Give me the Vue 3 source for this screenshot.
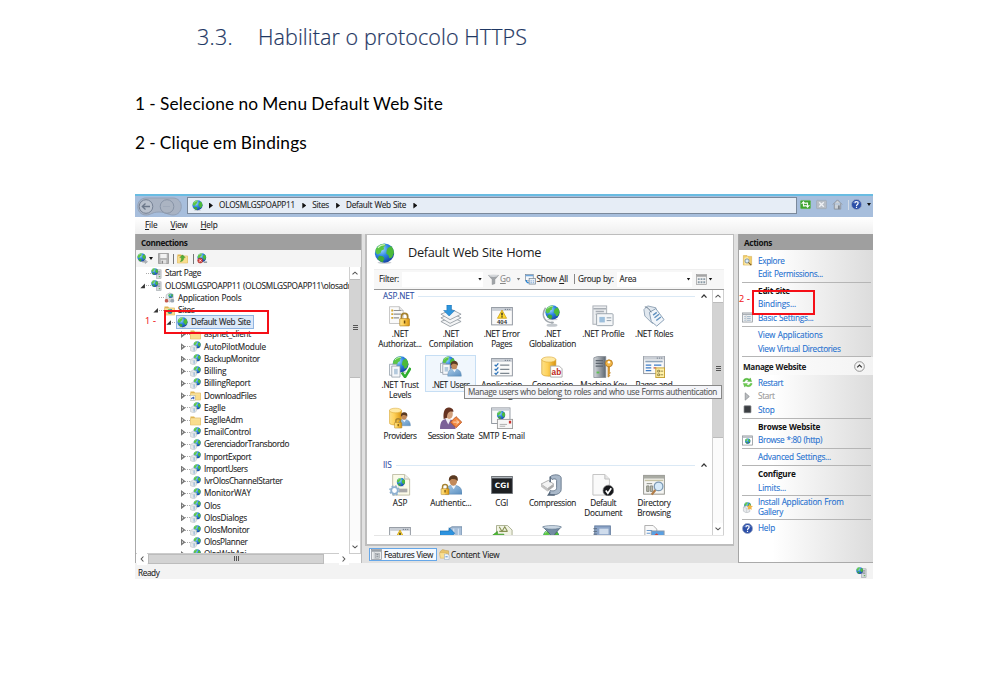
<script setup>
// Fits a label to a given width by adjusting its tracking.
const vFit = {
  mounted(el, { value }) {
    if (!value) return
    const range = document.createRange()
    range.selectNodeContents(el)
    const width = range.getBoundingClientRect().width
    el.style.letterSpacing = (value - width) / el.textContent.length + 'px'
  }
}

const app = (label, w) => ({ label, w, level: 3, icon: 'webapp', exp: 'closed' })
const tree = [
  { label: 'Start Page', w: 36, level: 0, icon: 'server' },
  { label: 'OLOSMLGSPOAPP11 (OLOSMLGSPOAPP11\\olosadm', w: 190, level: 0, icon: 'server', exp: 'open' },
  { label: 'Application Pools', w: 63.5, level: 1, icon: 'pools' },
  { label: 'Sites', w: 16.5, level: 1, icon: 'sites', exp: 'open' },
  { label: 'Default Web Site', w: 59.5, level: 2, icon: 'globe', exp: 'open', selected: true },
  { label: 'aspnet_client', w: 47, level: 3, icon: 'folder', exp: 'closed' },
  app('AutoPilotModule', 62),
  app('BackupMonitor', 56),
  app('Billing', 22.5),
  app('BillingReport', 46.5),
  { label: 'DownloadFiles', w: 52.5, level: 3, icon: 'shortcut', exp: 'closed' },
  app('Eaglle', 21.5),
  { label: 'EaglleAdm', w: 39, level: 3, icon: 'folder', exp: 'closed' },
  app('EmailControl', 47),
  app('GerenciadorTransbordo', 85),
  app('ImportExport', 47),
  app('ImportUsers', 43.5),
  app('IvrOlosChannelStarter', 78.5),
  app('MonitorWAY', 47),
  app('Olos', 16.5),
  app('OlosDialogs', 43),
  app('OlosMonitor', 45.5),
  app('OlosPlanner', 43.5),
  app('OlosWebApi', 42)
]

const aspnet = [
  { icon: 'authz', lines: [['.NET', 16.5], ['Authorizat...', 43.5]] },
  { icon: 'compile', lines: [['.NET', 16.5], ['Compilation', 44.5]] },
  { icon: 'error', lines: [['.NET Error', 36], ['Pages', 21]] },
  { icon: 'globalize', lines: [['.NET', 16.5], ['Globalization', 47]] },
  { icon: 'profile', lines: [['.NET Profile', 42]] },
  { icon: 'roles', lines: [['.NET Roles', 38]] },
  { icon: 'trust', lines: [['.NET Trust', 37], ['Levels', 22]] },
  { icon: 'users', lines: [['.NET Users', 38]], hot: true },
  { icon: 'settings', lines: [['Application', 41], ['Settings', 29]] },
  { icon: 'connstr', lines: [['Connection', 41], ['Strings', 25]] },
  { icon: 'machine', lines: [['Machine Key', 46]] },
  { icon: 'pages', lines: [['Pages and', 37], ['Controls', 30]] },
  { icon: 'providers', lines: [['Providers', 33]] },
  { icon: 'session', lines: [['Session State', 46.5]] },
  { icon: 'smtp', lines: [['SMTP E-mail', 46.5]] }
]
const iis = [
  { icon: 'asp', lines: [['ASP', 14.5]] },
  { icon: 'auth', lines: [['Authentic...', 41.5]] },
  { icon: 'cgi', lines: [['CGI', 13]] },
  { icon: 'compress', lines: [['Compression', 47]] },
  { icon: 'defdoc', lines: [['Default', 26], ['Document', 38]] },
  { icon: 'browse', lines: [['Directory', 33], ['Browsing', 33.5]] },
  { icon: 'error', lines: [] },
  { icon: 'failed', lines: [] },
  { icon: 'handler', lines: [] },
  { icon: 'filter', lines: [] },
  { icon: 'book', lines: [] },
  { icon: 'mime', lines: [] }
]

const actions = [
  { type: 'gap', h: 3.75 },
  { label: 'Explore', w: 26.5, icon: 'explore' },
  { label: 'Edit Permissions...', w: 65 },
  { type: 'sep', h: 3 },
  { label: 'Edit Site', w: 32, type: 'title' },
  { label: 'Bindings...', w: 38 },
  { label: 'Basic Settings...', w: 55.5, icon: 'basic' },
  { type: 'sep', h: 4 },
  { label: 'View Applications', w: 64.5 },
  { label: 'View Virtual Directories', w: 82.5 },
  { type: 'sep', h: 1.75 },
  { label: 'Manage Website', w: 63, type: 'section' },
  { type: 'gap', h: 0.75 },
  { label: 'Restart', w: 25, icon: 'restart' },
  { label: 'Start', w: 16.5, icon: 'start', off: true },
  { label: 'Stop', w: 16.5, icon: 'stop' },
  { type: 'sep', h: 3.75 },
  { label: 'Browse Website', w: 62, type: 'title' },
  { label: 'Browse *:80 (http)', w: 64, icon: 'page' },
  { type: 'sep', h: 3.25 },
  { label: 'Advanced Settings...', w: 73 },
  { type: 'sep', h: 3.5 },
  { label: 'Configure', w: 37.5, type: 'title' },
  { label: 'Limits...', w: 28 },
  { type: 'sep', h: 3 },
  { label: 'Install Application From', w: 85.5, second: 'Gallery', w2: 25, icon: 'gallery' },
  { type: 'sep', h: 4 },
  { label: 'Help', w: 17, icon: 'help' }
]
</script>

<template>
  <svg class="defs" aria-hidden="true">
    <defs>
      <radialGradient id="gOcean" cx=".35" cy=".3" r=".8">
        <stop offset="0" stop-color="#a5dcff" /><stop offset=".45" stop-color="#2e86e4" /><stop offset="1" stop-color="#12389a" />
      </radialGradient>
      <linearGradient id="gGold" x1="0" x2="1">
        <stop offset="0" stop-color="#fbe08a" /><stop offset=".4" stop-color="#ffd25a" /><stop offset="1" stop-color="#d9940f" />
      </linearGradient>
      <linearGradient id="gShirt" x1="0" x2="1" y2="1">
        <stop offset="0" stop-color="#a9cbe8" /><stop offset="1" stop-color="#5b8fc0" />
      </linearGradient>
      <linearGradient id="gSteel" x1="0" x2="1">
        <stop offset="0" stop-color="#d5d9dd" /><stop offset="1" stop-color="#5d6670" />
      </linearGradient>
    </defs>
    <symbol id="globe" viewBox="0 0 24 24">
      <ellipse cx="12" cy="22.4" rx="8" ry="1.4" fill="#c9cdd2" />
      <circle cx="12" cy="11.5" r="11" fill="url(#gOcean)" />
      <path d="M3 5.5C5 2.500 8.500 .8 12 .8l1.500 1.700-2.500 2 .5 2.500-3 1.500-1 3-3.500 1.500-2-2C1.300 9 2 7 3 5.500z" fill="#5cc645" />
      <path d="M15.500 6l4-2.500c2 2 3.300 5 3.300 8l-2.300 5-3 1-1-3.500-2.500-2 .5-3.500z" fill="#4cba3a" />
      <path d="M6 14.500l4 .5 2 2.500-2 4.500c-2.500-.5-5-2.500-6-4z" fill="#3fa838" />
      <path d="M4.500 5.500C7 2.500 10 1.800 12.500 2" fill="none" stroke="#d8f3c9" stroke-width="1.200" />
    </symbol>
    <symbol id="doc" viewBox="0 0 24 24">
      <path d="M3 1h13l5 5v17H3z" fill="#fafafa" stroke="#b5b5b5" /><path d="M16 1v5h5" fill="#e3e3e3" stroke="#b5b5b5" />
    </symbol>
    <symbol id="lock" viewBox="0 0 24 24">
      <path d="M7 12V7c0-6 10-6 10 0v5" fill="none" stroke="#a58230" stroke-width="3" />
      <rect x="4" y="11" width="16" height="12" rx="1" fill="url(#gGold)" stroke="#a9791c" /><path d="M12 14v5" stroke="#6d4c0c" stroke-width="2.500" />
    </symbol>
    <symbol id="person" viewBox="0 0 24 24">
      <path d="M2 24c0-9 4-11 10-11s11 2 11 11z" fill="url(#gShirt)" stroke="#5481ab" stroke-width=".6" />
      <path d="M9 13l3.500 5 3-5z" fill="#f3f6fa" />
      <ellipse cx="12" cy="7.500" rx="4.800" ry="6" fill="#c28a5b" /><path d="M6.500 8C6 2 9 .5 12.500 .5S18.500 3 17.500 8C16 5 12 5 10 5z" fill="#5a3a22" />
    </symbol>
    <symbol id="window" viewBox="0 0 24 24">
      <rect x=".7" y="2.700" width="22.600" height="19" fill="#fafafa" stroke="#8b929b" /><rect x="1.200" y="3.200" width="21.600" height="3.200" fill="#c9ced5" />
      <path d="M15 4.800h6" stroke="#6b7684" stroke-dasharray="1.400 1" />
    </symbol>
    <symbol id="cyl" viewBox="0 0 24 24">
      <path d="M4 4v16c0 4 16 4 16 0V4z" fill="url(#gGold)" stroke="#cf951d" stroke-width=".7" /><ellipse cx="12" cy="4" rx="8" ry="3" fill="#ffe9a3" stroke="#dca832" stroke-width=".7" />
    </symbol>

    <symbol id="server" viewBox="0 0 24 24">
      <rect x="12" y="4" width="10" height="19" fill="#d4d8dc" stroke="#8a9097" /><path d="M14 8h6M14 11h6M14 14h6" stroke="#6f767d" stroke-width="1.300" /><rect x="17" y="18" width="3" height="2" fill="#48a63a" />
      <use href="#globe" x="0" y="0" width="16" height="16" />
    </symbol>
    <symbol id="pools" viewBox="0 0 24 24">
      <path d="M5 6l7-4 8 3v13l-8 4-8-4z" fill="#e9ebed" stroke="#92989f" /><path d="M12 7v14M4 12l8 4 8-4" fill="none" stroke="#b5babf" />
      <rect x="2" y="15" width="7" height="8" rx="3" fill="#c55c4f" /><rect x="14" y="15" width="8" height="8" rx="3" fill="#9aa5b0" /><use href="#globe" x="9" y="3" width="11" height="11" />
    </symbol>
    <symbol id="folder" viewBox="0 0 24 24">
      <path d="M1 3h8l2 3h12v16H1z" fill="#e0b550" /><path d="M1 7h22v15H1z" fill="#f9dd8d" stroke="#deb660" /><path d="M2 8.500h20" stroke="#fff3c4" />
    </symbol>
    <symbol id="sites" viewBox="0 0 24 24">
      <use href="#folder" width="24" height="24" /><use href="#globe" x="7" y="8" width="12" height="12" />
    </symbol>
    <symbol id="shortcut" viewBox="0 0 24 24">
      <use href="#folder" width="24" height="24" /><rect x="0" y="12" width="11" height="11" fill="#fff" stroke="#9aa" /><path d="M2 21c0-4 2-5 5-5v-2.500l3 4-3 3.500v-2.500c-2 0-3 .5-5 2.500z" fill="#2c55b8" />
    </symbol>
    <symbol id="webapp" viewBox="0 0 24 24">
      <use href="#globe" x="7" y="0" width="17" height="17" />
      <path d="M1 12l6-3.500 7 2.500v9l-5 4-8-3z" fill="#e6e8eb" stroke="#b3b8be" /><path d="M1 12l8 3 5-4M9 15v8" fill="none" stroke="#c3c7cc" /><path d="M9 14v7" stroke="#6aa7dc" stroke-width="1.600" />
    </symbol>
    <symbol id="gallery" viewBox="0 0 24 24">
      <use href="#globe" x="4" y="0" width="16" height="16" /><path d="M3 11l7-3 7 4v9l-7 3-7-4z" fill="#e8eaed" stroke="#a1a7ae" /><path d="M3 11l7 3v10M10 14l7-2" fill="none" stroke="#b5babf" />
      <path d="M17 4l2 4 5 .5-3.500 3.500 1 5-4.500-2.500-4.500 2.500 1-5L10 8.500l5-.5z" fill="#f3b445" />
    </symbol>

    <symbol id="authz" viewBox="0 0 24 24">
      <use href="#doc" x="-2" y="0" width="20" height="22" /><path d="M5 6h8M5 10h8M5 14h6" stroke="#8f8f8f" stroke-width="1.300" /><path d="M2.500 5h2v2h-2zM2.500 9h2v2h-2zM2.500 13h2v2h-2z" fill="#d5a632" />
      <use href="#lock" x="9" y="7" width="16" height="17" />
    </symbol>
    <symbol id="compile" viewBox="0 0 24 24">
      <g fill="#f4f5f6" stroke="#8e969e" stroke-width=".9"><path d="M1 18l12-5 10 5-12 5.500z" /><path d="M1 14l12-5 10 5-12 6z" /><path d="M1 10l12-5 10 5-12 6z" /></g>
      <path d="M7.500 0h5v6h3.500l-6 6-6-6h3.500z" fill="#2d95dd" stroke="#1870b5" stroke-width=".6" />
    </symbol>
    <symbol id="error" viewBox="0 0 24 24">
      <use href="#window" width="24" height="24" /><path d="M12 5.500l5 9H7z" fill="#ffd92e" stroke="#c99a10" stroke-width=".8" /><path d="M12 8.500v3M12 12.300v1.200" stroke="#222" stroke-width="1.400" />
      <text x="12" y="20.800" text-anchor="middle" font-family="Liberation Sans" font-weight="700" font-size="6.500" fill="#333">404</text>
    </symbol>
    <symbol id="globalize" viewBox="0 0 24 24">
      <path d="M5 3C-1 12 5 20 14 19M12 18v3" fill="none" stroke="#a2a8ae" stroke-width="1.600" /><ellipse cx="12" cy="22" rx="6" ry="1.700" fill="#c3c8cd" /><use href="#globe" x="4" y="0" width="17" height="17" />
    </symbol>
    <symbol id="profile" viewBox="0 0 24 24">
      <rect x="1" y="1" width="15" height="20" fill="#eceef0" stroke="#a7adb4" /><path d="M1.500 4h14M4 7h9M4 10h5" stroke="#a7adb4" stroke-width="1.600" />
      <rect x="5" y="9.500" width="18" height="13" rx="1" fill="#f4f6f8" stroke="#98a1aa" /><rect x="8" y="13" width="6" height="6" fill="#9dbfdc" /><path d="M16 14h5M16 17h5" stroke="#8997a5" />
    </symbol>
    <symbol id="roles" viewBox="0 0 24 24">
      <path d="M1 5l4-4 9 2 2 13-6 4-8-8z" fill="#e1e8ef" stroke="#8ea1b3" />
      <path d="M7 8l7-4 9 12-8 7-6-5z" fill="#f1f5fa" stroke="#8299b0" /><path d="M11 11l4-3M12.500 14l5-4M14.500 17l5-4" stroke="#5f91bf" stroke-width="1.500" /><path d="M2 2c3 0 5 3 7 6" fill="none" stroke="#607487" />
    </symbol>
    <symbol id="trust" viewBox="0 0 24 24">
      <use href="#globe" x="3" y="0" width="19" height="19" /><g fill="#f6f8fa" stroke="#8b97a3" stroke-width=".8"><path d="M.5 9h8v12h-8z" /><path d="M3 11h9v12H3z" /></g><path d="M5.500 14h4v6h-4z" fill="#b4cadd" />
      <path d="M14 18l3.500 5L23.500 13" fill="none" stroke="#2fae2f" stroke-width="2.800" />
    </symbol>
    <symbol id="users" viewBox="0 0 24 24">
      <use href="#globe" x="2" y="0" width="15" height="15" /><g fill="#f6f8fa" stroke="#8b97a3" stroke-width=".8"><path d="M.5 8h6v10h-6z" /><path d="M3 9h8v11H3z" /></g><path d="M5 12h4v5H5z" fill="#b4cadd" />
      <use href="#person" x="7" y="3" width="17" height="21" />
    </symbol>
    <symbol id="settings" viewBox="0 0 24 24">
      <use href="#window" width="24" height="24" /><path d="M4 9.500l1.500 1.500 2.500-3M4 14l1.500 1.500 2.500-3M4 18.500L5.500 20 8 17" fill="none" stroke="#2c72b8" stroke-width="1.400" /><path d="M10 10h10M10 14.500h10M10 19h10" stroke="#7d8790" stroke-width="1.300" />
    </symbol>
    <symbol id="connstr" viewBox="0 0 24 24">
      <use href="#cyl" x="-3" y="0" width="23" height="23" /><path d="M10.500 11h9.500l3 3v9H10.500z" fill="#fff" stroke="#aaa" /><text x="16.800" y="20.500" text-anchor="middle" font-family="Liberation Sans" font-weight="700" font-size="9" fill="#bd2520">ab</text>
    </symbol>
    <symbol id="machine" viewBox="0 0 24 24">
      <path d="M2 2l4-1.500h9V23.500H2z" fill="url(#gSteel)" stroke="#7f878f" stroke-width=".8" /><path d="M4 5h8M4 8h8M4 11h8" stroke="#5d656e" stroke-width="1.200" /><rect x="5" y="17" width="3" height="2" fill="#5ec251" />
      <circle cx="18.500" cy="8" r="3.800" fill="#f3b84a" stroke="#b7791b" /><circle cx="18.500" cy="6.800" r="1.300" fill="#fff" /><path d="M17.500 12v11l2-1.500-1-1.500 1.500-1.500-1-1.500V12z" fill="#e9a437" stroke="#b7791b" stroke-width=".8" />
    </symbol>
    <symbol id="pages" viewBox="0 0 24 24">
      <use href="#window" x="0" y="-2.500" width="24" height="24" /><path d="M2.500 6h19" stroke="#8fa5bb" stroke-width="1.800" /><path d="M3 10h6M3 13h6M3 16h6M12 10h8" stroke="#3c7cc8" stroke-width="1.400" /><path d="M11.500 13h3" stroke="#c94a3b" stroke-width="1.400" />
      <rect x="14" y="13" width="9.500" height="10.500" fill="#fff1a8" stroke="#c39c2e" /><path d="M16 15.500h2v2h-2zM16 19.500h2v2h-2zM19 16.500h3M19 20.500h3" stroke="#7a6a2c" stroke-width=".8" fill="none" />
    </symbol>
    <symbol id="providers" viewBox="0 0 24 24">
      <use href="#cyl" x="-3" y="0" width="20" height="21" /><use href="#person" x="9" y="3" width="15" height="20" /><use href="#lock" x="4" y="11" width="12" height="13" />
    </symbol>
    <symbol id="session" viewBox="0 0 24 24">
      <path d="M0 24c0-9 3-11 8-11s9 2 9 11z" fill="#7c6297" /><path d="M6 13l3 6 3-6z" fill="#f2eff5" /><ellipse cx="10" cy="7.500" rx="4" ry="5.500" fill="#d3a17c" /><path d="M4 13C3 4 6 0 10 .5s5 3 4.500 5C10 4 8 6 7.500 12z" fill="#663321" />
      <path d="M11.500 16.500l6-6 6.200 6-6.200 6z" fill="#f28a43" stroke="#b9501a" /><path d="M14.500 16.500h6M18 14.500l2.500 2-2.500 2" fill="none" stroke="#ffe0c3" />
    </symbol>
    <symbol id="smtp" viewBox="0 0 24 24">
      <rect x=".7" y="1" width="20" height="17" fill="#fafafa" stroke="#8b929b" /><path d="M1 2.800h19.500" stroke="#c9ced5" stroke-width="2.500" /><use href="#globe" x="6" y="4" width="10" height="10" />
      <rect x="7" y="13.500" width="16.500" height="10" fill="#f6f6f6" stroke="#9c9c9c" /><rect x="19.500" y="15" width="2.500" height="3" fill="#c9302c" /><path d="M9.500 19h8M9.500 21h6" stroke="#a9a9a9" />
    </symbol>
    <symbol id="asp" viewBox="0 0 24 24">
      <path d="M4 .5h13l5.500 5V23H4z" fill="#fbfae8" stroke="#bdbba3" /><path d="M17 .5v5h5" fill="#eee" stroke="#bdbba3" /><use href="#globe" x="8" y="4" width="10" height="10" /><rect x="11" y="16" width="9" height="4" fill="#a9a9a9" />
      <circle cx="6" cy="18" r="3.600" fill="#fff" stroke="#8fb1d0" stroke-width="2" /><circle cx="6" cy="18" r="5" fill="none" stroke="#8fb1d0" stroke-width="1.600" stroke-dasharray="2 1.930" />
    </symbol>
    <symbol id="auth" viewBox="0 0 24 24">
      <use href="#person" x="4" y="0" width="21" height="23" /><use href="#lock" x="-1" y="9" width="13" height="15" />
    </symbol>
    <symbol id="cgi" viewBox="0 0 24 24">
      <rect x=".7" y="2.700" width="22.600" height="18.600" fill="#1d1f22" stroke="#70757a" /><path d="M1 4h22" stroke="#aeb4ba" stroke-width="1.500" />
      <text x="12" y="15.300" text-anchor="middle" font-family="DejaVu Sans" font-weight="700" font-size="8" textLength="16" fill="#fff">CGI</text>
    </symbol>
    <symbol id="compress" viewBox="0 0 24 24">
      <path d="M10 3c3-3 11-3 12 1v13c0 5-8 7-13 5l1-4c4 1 7 0 7-3V7c0-2-3-2-5-1z" fill="#a9b8c9" stroke="#5e7084" stroke-width=".9" />
      <path d="M0 11l8-4 6 4-7 5z" fill="#f3f3f3" stroke="#989898" stroke-width=".8" /><path d="M0 11v3l7 5v-3z" fill="#c3c3c3" /><path d="M7 19l7-5v-3l-7 5z" fill="#ababab" /><path d="M10 3v6M10 20l-2 3h7" stroke="#55677b" stroke-width="1.600" fill="none" />
    </symbol>
    <symbol id="defdoc" viewBox="0 0 24 24">
      <path d="M1 .5h13l5 5V23H1z" fill="#fafafa" stroke="#bdbdbd" /><path d="M14 .5v5h5" fill="#e6e6e6" stroke="#bdbdbd" /><circle cx="17.800" cy="18" r="5.800" fill="#15171a" stroke="#777" stroke-width=".7" /><path d="M15 18l2.300 3 3.700-5.500" fill="none" stroke="#fff" stroke-width="1.800" />
    </symbol>
    <symbol id="browse" viewBox="0 0 24 24">
      <rect x=".7" y="1.500" width="22.600" height="20.500" fill="#f5f5f3" stroke="#8e8f88" /><path d="M1 3.500h22" stroke="#a9aba3" stroke-width="3" /><path d="M2 7h20" stroke="#c6c3a4" stroke-width="1.600" /><path d="M4 10.500h6" stroke="#828579" /><path d="M4 13h2.500v6H4zM8 13h2.500v6H8z" fill="#b7b9af" stroke="#828579" />
      <circle cx="17" cy="13.500" r="4.700" fill="#d7ebfa" stroke="#7d9ab4" stroke-width="1.400" /><path d="M13.500 17.500l-4 5" stroke="#b17c48" stroke-width="2.500" />
    </symbol>
    <symbol id="failed" viewBox="0 0 24 24">
      <path d="M10 4l3-2h11v22H10z" fill="#a8bfd9" stroke="#6f88a4" /><path d="M15 4v20M20 4v20" stroke="#e1ebf5" /><path d="M0 6.500h10V3l6 6-6 6v-3.500H0z" fill="#2d92de" stroke="#186cae" stroke-width=".7" />
    </symbol>
    <symbol id="handler" viewBox="0 0 24 24">
      <path d="M6 .5h12l5 5V24H6z" fill="#f1f3e4" stroke="#a5ab8a" /><path d="M9 2l3 5 3-5 3 5M9 7h9" fill="none" stroke="#858f51" stroke-width="1.200" /><path d="M14 10H7V7l-7 5.500 7 6v-4h7z" fill="#4cbb33" stroke="#2f8a20" stroke-width=".7" />
    </symbol>
    <symbol id="filter" viewBox="0 0 24 24">
      <use href="#globe" x="1" y="4" width="20" height="20" /><path d="M2 2h20l-7 8v7h-5v-7z" fill="#748ca3" stroke="#43576c" stroke-width=".8" /><ellipse cx="12" cy="2.500" rx="10" ry="2" fill="#c8d5e1" stroke="#5a7087" stroke-width=".6" />
    </symbol>
    <symbol id="book" viewBox="0 0 24 24">
      <rect x="3" y="1" width="17" height="22" fill="#8ca4c7" stroke="#5f789c" /><rect x="8" y="4" width="10" height="6" fill="#cfdcec" /><path d="M1.500 4h4M1.500 7h4M1.500 10h4" stroke="#5b6b80" />
    </symbol>
    <symbol id="mime" viewBox="0 0 24 24">
      <path d="M2 .5h9l4 4V22H2z" fill="#fafafa" stroke="#a6a6a6" /><path d="M4 6h6M4 9h4" stroke="#5a8fc9" /><rect x="9" y="6.500" width="14" height="12" fill="#5aa0e2" stroke="#8c98a5" /><path d="M11 12l4-3 4 4 3-2v4H11z" fill="#d0453a" />
    </symbol>

    <symbol id="explore" viewBox="0 0 24 24">
      <path d="M3 1h8l2 2h8v19H3z" fill="#f3ce68" stroke="#caa03b" /><path d="M5 6l8-2 6 17H5z" fill="#fbe9ab" /><circle cx="11" cy="13" r="4.500" fill="#dcecf8" stroke="#6f87a0" stroke-width="1.800" /><path d="M14 16l6 6" stroke="#7a5c2c" stroke-width="2.600" />
    </symbol>
    <symbol id="basic" viewBox="0 0 24 24">
      <rect x="1" y="2" width="22" height="20" fill="#eef0f2" stroke="#878d94" stroke-width="1.500" /><path d="M2 5h20" stroke="#aab0b6" stroke-width="3" /><path d="M5 10h3M5 14h3M5 18h3M11 10h8M11 14h8M11 18h8" stroke="#93aac0" stroke-width="1.800" /><path d="M9 6v15" stroke="#aab0b6" />
    </symbol>
    <symbol id="features" viewBox="0 0 24 24">
      <rect x="1" y="1" width="22" height="22" fill="#eceeef" stroke="#878d94" stroke-width="1.500" /><path d="M2 4h20" stroke="#9ba1a7" stroke-width="4" /><path d="M7 6v16" stroke="#aab0b6" stroke-width="1.500" /><rect x="10" y="9" width="8" height="11" fill="#c8cdd1" stroke="#7f868d" /><path d="M12 12h4M12 16h4" stroke="#6f767d" stroke-width="1.500" />
    </symbol>
    <symbol id="restart" viewBox="0 0 24 24">
      <path d="M2 10C3 3 11 1 16 5l2-3 3 8-9-.5 3-2C11 5 7 6 6 10z" fill="#5cc441" stroke="#379b25" stroke-width=".8" /><path d="M22 14c-1 7-9 9-14 5l-2 3-3-8 9 .5-3 2c4 2.500 8 1.500 9-2.500z" fill="#6fd04f" stroke="#379b25" stroke-width=".8" />
    </symbol>
    <symbol id="start" viewBox="0 0 24 24"><path d="M7 4l9 8-9 8z" fill="#b9bcbf" stroke="#85898d" stroke-width="1.500" /></symbol>
    <symbol id="stop" viewBox="0 0 24 24"><rect x="4.500" y="4" width="15" height="15" rx="1" fill="#3b3e42" stroke="#75797e" stroke-width="1.500" /></symbol>
    <symbol id="page" viewBox="0 0 24 24"><rect x="1" y="2" width="22" height="20" fill="#fff" stroke="#868c93" stroke-width="1.600" /><path d="M2 4.500h20" stroke="#abb1b8" stroke-width="3" /><use href="#globe" x="6" y="7" width="13" height="13" /></symbol>
    <symbol id="help" viewBox="0 0 24 24">
      <circle cx="12" cy="12" r="11" fill="#2c4fa8" stroke="#9ba7c4" stroke-width="1.800" /><path d="M4 9c2-6 14-6 16 0-4-3-12-3-16 0z" fill="#93aae0" /><path d="M8.500 9.500c0-5 7.500-4.500 7 0-.3 2.500-3.500 2.500-3.500 5.500M12 16.800v2.700" fill="none" stroke="#fff" stroke-width="2.600" />
    </symbol>
    <symbol id="connect" viewBox="0 0 24 24"><use href="#globe" width="20" height="20" /><path d="M12 18h6v-3l5 4-5 4v-3h-6z" fill="#b8bec4" stroke="#70777e" stroke-width=".8" /></symbol>
    <symbol id="save" viewBox="0 0 24 24"><path d="M1 1h22v22H1z" fill="#b3b3b3" stroke="#898989" stroke-width="1.500" /><path d="M5 2h14v9H5z" fill="#f2f2f2" /><path d="M6 15h12v8H6z" fill="#e1e1e1" /><path d="M8 17h3v6H8z" fill="#888" /></symbol>
    <symbol id="up" viewBox="0 0 24 24"><use href="#folder" width="24" height="24" /><path d="M12 4l6 6h-3c0 6-3 9-8 9 3-3 3-6 2-9H6z" fill="#52ae37" stroke="#348425" stroke-width=".8" /></symbol>
    <symbol id="disconnect" viewBox="0 0 24 24"><use href="#globe" width="21" height="21" /><circle cx="7" cy="16.500" r="5.500" fill="#d23b36" stroke="#97201c" /><path d="M4.500 14l5 5M9.500 14l-5 5" stroke="#fff" stroke-width="1.800" /><path d="M15 20h7" stroke="#8a9097" stroke-width="3" /></symbol>
    <symbol id="refresh" viewBox="0 0 24 24"><rect x="1" y="3" width="22" height="18" rx="2" fill="#3fa52e" stroke="#69bd5b" /><path d="M7.500 6v9h5M3.500 10.500l4-4.500 4 4.500M16.500 18V9h-5M12.500 13.500l4 4.500 4-4.500" fill="none" stroke="#fff" stroke-width="2.200" /></symbol>
    <symbol id="halt" viewBox="0 0 24 24"><rect x="1" y="3" width="22" height="18" rx="2" fill="#b7bdc5" stroke="#959eaa" /><path d="M7 7l10 10M17 7L7 17" stroke="#eef1f5" stroke-width="3" /></symbol>
    <symbol id="home" viewBox="0 0 24 24"><path d="M2 12L12 2l10 10M5 10v12h14V10" fill="#ccd2d8" stroke="#8b929b" stroke-width="2" /><path d="M13 14h4v8h-4z" fill="#7f868f" /></symbol>
    <symbol id="funnel" viewBox="0 0 24 24"><path d="M1 3h22l-8 9v9l-6 2V12z" fill="#a0a4a8" stroke="#83878b" /><ellipse cx="12" cy="4" rx="10" ry="2.500" fill="#d5d8db" /></symbol>
    <symbol id="showall" viewBox="0 0 24 24"><rect x="1" y="1" width="17" height="14" fill="#f5f8fb" stroke="#788594" stroke-width="1.500" /><path d="M1 3.500h17" stroke="#6ea6dc" stroke-width="3" /><rect x="9" y="10" width="14" height="12" fill="#edf2f7" stroke="#708090" stroke-width="1.500" /><path d="M3 13c0 5 1 6 5 6" fill="none" stroke="#2c87d5" stroke-width="3" /><path d="M12 15h3M17 15h3M12 19h3M17 19h3" stroke="#4c86c5" stroke-width="1.500" /></symbol>
    <symbol id="grid" viewBox="0 0 24 24"><rect x="1" y="1" width="22" height="22" fill="#f1f1f1" stroke="#9a9a9a" stroke-width="1.500" /><path d="M1 4h22" stroke="#a5a5a5" stroke-width="4" /><path d="M4 9h4v4H4zM10 9h4v4h-4zM16 9h4v4h-4zM4 16h4v4H4zM10 16h4v4h-4zM16 16h4v4h-4z" fill="#8a9aa5" /></symbol>
    <symbol id="content" viewBox="0 0 24 24"><path d="M3 5l5-4 6 2 7 1v12H3z" fill="#e7c36b" stroke="#bb9440" /><path d="M1 8h15l3 12H3z" fill="#f9df92" stroke="#d2a850" /><path d="M12 11h7l3 3v9H12z" fill="#f2f6fb" stroke="#85a0bd" /><path d="M14 17h5" stroke="#4d8aca" stroke-width="2" /></symbol>
    <symbol id="chev" viewBox="0 0 12 12"><path d="M3 7.700L6 5l3 2.700" fill="none" stroke="#555" stroke-width="1.300" /></symbol>
    <symbol id="chevBold" viewBox="0 0 12 12"><path d="M3 8l3-3.200L9 8" fill="none" stroke="#333" stroke-width="1.500" /></symbol>
  </svg>

  <main class="doc">
    <h1><span v-fit="36">3.3.</span><span v-fit="269">Habilitar o protocolo HTTPS</span></h1>
    <p><span v-fit="308">1 - Selecione no Menu Default Web Site</span></p>
    <p><span v-fit="172">2 - Clique em Bindings</span></p>

    <section class="window">
      <div class="address">
        <svg class="nav" viewBox="0 0 48 20">
          <path d="M11 2h27c11 0 11 17 0 17-5 0-7-3-14-3s-8 3-13 3C0 19 0 2 11 2z" fill="#a9b3c3" stroke="#93a1b6" />
          <circle cx="11" cy="10.500" r="6.800" fill="#b9c1cd" stroke="#778396" /><path d="M15 10.500H7.500M10.500 7.500l-3.200 3 3.200 3" fill="none" stroke="#6b7789" stroke-width="1.300" />
          <circle cx="32" cy="10.500" r="6.800" fill="#abb4c2" stroke="#8894a7" /><path d="M28 10.500h7" stroke="#a0aaba" />
        </svg>
        <div class="crumbs">
          <svg class="i11"><use href="#globe" /></svg>
          <i class="tri"></i><span v-fit="76">OLOSMLGSPOAPP11</span>
          <i class="tri"></i><span v-fit="16.5">Sites</span>
          <i class="tri"></i><span v-fit="60">Default Web Site</span>
          <i class="tri"></i>
        </div>
        <div class="tools">
          <svg class="i11"><use href="#refresh" /></svg>
          <svg class="i11"><use href="#halt" /></svg>
          <svg class="i11"><use href="#home" /></svg>
          <i class="vline"></i>
          <svg class="i11 helpico"><use href="#help" /></svg>
          <i class="drop"></i>
        </div>
      </div>

      <nav class="menu">
        <span v-fit="12.5"><u>F</u>ile</span><span v-fit="17"><u>V</u>iew</span><span v-fit="17"><u>H</u>elp</span>
      </nav>

      <div class="body">
        <aside class="connections">
          <header><b v-fit="46.500">Connections</b></header>
          <div class="ctools">
            <svg class="i11"><use href="#connect" /></svg><i class="drop"></i>
            <svg class="i11 save"><use href="#save" /></svg><i class="vline"></i>
            <svg class="i11"><use href="#up" /></svg><i class="vline second"></i>
            <svg class="i11"><use href="#disconnect" /></svg>
          </div>
          <div class="treebox">
            <div class="tree">
              <div v-for="n in tree" :key="n.label" class="node" :class="'l' + n.level">
                <i class="exp" :class="n.exp"></i><i class="dash"></i>
                <span class="entry" :class="{ selected: n.selected }">
                  <svg class="i11"><use :href="'#' + n.icon" /></svg><span v-fit="n.w" class="name">{{ n.label }}</span>
                </span>
              </div>
            </div>
            <div class="vbar">
              <svg class="arrow"><use href="#chev" /></svg>
              <div class="thumb tall"><i class="grip"></i></div>
              <svg class="arrow down"><use href="#chev" /></svg>
            </div>
          </div>
          <div class="hbar">
            <svg class="arrow left"><use href="#chev" /></svg>
            <div class="hthumb"><i class="grip vert"></i></div>
            <svg class="arrow right"><use href="#chev" /></svg>
          </div>
        </aside>

        <div class="center">
          <div class="pane">
            <div class="heading"><svg><use href="#globe" /></svg><span v-fit="133">Default Web Site Home</span></div>
            <div class="filter">
              <span v-fit="20">Filter:</span>
              <div class="box"><i class="drop"></i></div>
              <svg class="i11 funnel"><use href="#funnel" /></svg><span v-fit="10.500" class="dim"><u>G</u>o</span><i class="drop dimdrop"></i>
              <svg class="i11 all"><use href="#showall" /></svg><span v-fit="31.500">Show <u>A</u>ll</span><i class="vline dark"></i>
              <span v-fit="35.500">Group by:</span>
              <div class="box area"><span v-fit="17">Area</span><i class="drop"></i></div>
              <svg class="i11 gridico"><use href="#grid" /></svg><i class="drop"></i>
            </div>
            <div class="list">
              <div class="features">
                <div class="group"><span v-fit="31">ASP.NET</span><i class="rule"></i><svg><use href="#chevBold" /></svg></div>
                <div class="cells">
                  <div v-for="f in aspnet" :key="f.icon" class="cell" :class="{ hot: f.hot }">
                    <svg class="big"><use :href="'#' + f.icon" /></svg>
                    <span v-for="l in f.lines" :key="l[0]" v-fit="l[1]">{{ l[0] }}</span>
                  </div>
                </div>
                <div class="group second"><span v-fit="8.500">IIS</span><i class="rule"></i><svg><use href="#chevBold" /></svg></div>
                <div class="cells">
                  <div v-for="f in iis" :key="f.icon" class="cell">
                    <svg class="big"><use :href="'#' + f.icon" /></svg>
                    <span v-for="l in f.lines" :key="l[0]" v-fit="l[1]">{{ l[0] }}</span>
                  </div>
                </div>
              </div>
              <div class="vbar">
                <svg class="arrow"><use href="#chev" /></svg>
                <div class="thumb long"><i class="grip"></i></div>
                <svg class="arrow down"><use href="#chev" /></svg>
              </div>
            </div>
          </div>
          <div class="tabs">
            <div class="tab on"><svg class="i11"><use href="#features" /></svg><span v-fit="49">Features View</span></div>
            <div class="tab"><svg class="i11"><use href="#content" /></svg><span v-fit="48.500">Content View</span></div>
          </div>
        </div>

        <aside class="actions">
          <header><b v-fit="28">Actions</b></header>
          <template v-for="(a, i) in actions" :key="i">
            <div v-if="a.type === 'gap' || a.type === 'sep'" :class="a.type" :style="{ height: a.h + 'px' }"></div>
            <div v-else-if="a.type === 'section'" class="section">
              <b v-fit="a.w">{{ a.label }}</b>
              <svg viewBox="0 0 12 12"><circle cx="6" cy="6" r="5.300" fill="#f5f5f5" stroke="#8c8c8c" /><path d="M3.500 7L6 4.500 8.500 7" fill="none" stroke="#333" stroke-width="1.300" /></svg>
            </div>
            <div v-else class="action" :class="[a.type, { off: a.off, two: a.second }]">
              <svg class="i11"><use v-if="a.icon" :href="'#' + a.icon" /></svg>
              <div><div><span v-fit="a.w">{{ a.label }}</span></div><div v-if="a.second"><span v-fit="a.w2">{{ a.second }}</span></div></div>
            </div>
          </template>
        </aside>
      </div>

      <footer><span v-fit="21.500">Ready</span><svg class="i11"><use href="#server" /></svg></footer>

      <div class="tooltip"><span v-fit="249">Manage users who belong to roles and who use Forms authentication</span></div>
      <div class="mark m1"></div><div class="num n1">1 -</div>
      <div class="mark m2"></div><div class="num n2">2 -</div>
    </section>
  </main>
</template>

<style>
body { background: #fff; }
</style>

<style scoped>
* { box-sizing: border-box; }
.defs { position: absolute; width: 0; height: 0; }
.doc { width: 998px; height: 686px; padding: 20px 125px 0 135px; overflow: hidden; font-family: "Open Sans", sans-serif; }
h1 { display: flex; gap: 25px; margin: 0 0 0 62px; height: 34px; font: 300 21.500px/33px "Open Sans", sans-serif; color: #1f3864; white-space: nowrap; -webkit-text-stroke: .2px currentColor; }
p { margin: 0; height: 39px; font: 400 17.300px/39px Lato, sans-serif; word-spacing: -.6px; color: #000; white-space: nowrap; }
h1 + p { margin-top: 30px; }
.window { position: relative; width: 738px; height: 385px; margin-top: 32px; font-size: 8.200px; word-spacing: .5px; line-height: 12px; color: #1c1c1c; white-space: nowrap; background: #f3f3f3; -webkit-text-stroke: .1px currentColor; }
.i11 { width: 11px; height: 11px; flex: none; display: block; }
.address { height: 23px; padding-bottom: 2px; display: flex; align-items: center; border-top: 2px solid #69bce2; background: #a7bedc; }
.nav { width: 48px; height: 20px; margin-left: 0; }
.crumbs { width: 610px; height: 17px; margin-left: 4px; padding-left: 4px; border: 1px solid #7b899b; background: #e6edf6; display: flex; align-items: center; }
.crumbs span { margin: -1px 1.300px 0 0; }
.tri { width: 4px; height: 6px; flex: none; margin: 0 6px; background: #111; clip-path: polygon(0 0, 100% 50%, 0 100%); }
.tools { display: flex; align-items: center; gap: 5px; margin-left: 3px; margin-top: -2px; }
.vline { width: 1px; height: 10px; background: #d2dbe7; }
.helpico { margin-left: -3px; }
.drop { width: 4px; height: 3px; background: #111; clip-path: polygon(0 0, 100% 0, 50% 100%); flex: none; }
.menu { height: 17px; display: flex; gap: 13px; padding: 0 10px; line-height: 16px; background: linear-gradient(#fff, #efefef); }
.body { height: 329px; display: flex; background: #e1e1e1; }
header { height: 16px; padding-left: 5px; line-height: 17px; background: #9f9f9f; color: #111; }
b { font-weight: 700; -webkit-text-stroke: 0; }

.connections { width: 227px; margin-right: 4px; border-left: 1px solid #aaa; border-right: 1px solid #bbb; }
.ctools { height: 17px; display: flex; align-items: center; padding-left: 1px; background: #f4f4f4; }
.ctools .drop { margin-left: 1px; }
.ctools .save { margin: 0 4px 0 5px; }
.ctools .vline { background: #777; margin-right: 3px; }
.ctools .vline.second { margin-left: 5px; margin-right: 3px; }
.treebox { height: 286px; display: flex; background: #fff; overflow: hidden; }
.tree { width: 213px; padding-top: .4px; overflow: hidden; }
.node { height: 12.220px; line-height: 12.220px; display: flex; align-items: center; }
.l0 { padding-left: 3px; }
.l1 { padding-left: 16px; }
.l2 { padding-left: 29px; }
.l3 { padding-left: 42px; }
.exp { width: 7px; height: 7px; flex: none; }
.exp.open { clip-path: polygon(85% 20%, 85% 85%, 20% 85%); background: #333; }
.exp.closed::before { content: ""; display: block; width: 5px; height: 7px; margin-left: 3px; background: #777; clip-path: polygon(0 0, 90% 50%, 0 100%, 0 70%, 45% 50%, 22% 30%, 22% 75%, 0 100%); }
.dash { width: 5px; height: 1px; flex: none; border-top: 1px dotted #aaa; }
.entry { display: flex; align-items: center; gap: 3px; height: 12px; }
.entry.selected { outline: 1px solid #8fb4e2; background: #dbe8f8; padding-right: 2px; }
.name { flex: none; }
.vbar { width: 12px; flex: none; display: flex; flex-direction: column; border: solid #d0d0d0; border-width: 0 1px; background: #fbfbfb; }
.arrow { width: 10px; height: 12px; flex: none; background: #fff; }
.down { transform: rotate(180deg); margin-top: auto; }
.thumb { background: #d3d3d3; border: solid #bcbcbc; border-width: 1px 0; display: flex; justify-content: center; }
.tall { height: 99px; padding-top: 45px; }
.long { height: 136px; padding-top: 63px; }
.grip { width: 5px; height: 5px; background: repeating-linear-gradient(#555 0 1px, transparent 1px 2px); }
.grip.vert { background: repeating-linear-gradient(90deg, #555 0 1px, transparent 1px 2px); }
.hbar { height: 10px; display: flex; background: #fff; align-items: center; border-top: 1px solid #ccc; }
.left { transform: rotate(-90deg); height: 10px; width: 12px; }
.right { transform: rotate(90deg); margin-left: 14px; height: 10px; width: 12px; }
.hthumb { width: 176px; height: 10px; background: #d3d3d3; border: 1px solid #bcbcbc; display: flex; align-items: center; justify-content: center; }

.center { width: 368px; margin-left: -1px; }
.pane { height: 312px; border: solid #bdbdbd; border-width: 1px 1px 2px 2px; background: #fff; padding-left: 7px; margin-right: -1px; }
.heading { height: 34px; display: flex; gap: 13px; align-items: center; font-size: 12.800px; line-height: 34px; -webkit-text-stroke: 0; }
.heading svg { width: 21px; height: 21px; margin: 3px 0 0 0; }
.heading span { margin-top: -1px; }
.filter { height: 21px; width: 350px; display: flex; align-items: center; padding: 0 0 1px 5px; background: #f7f7f7; border-top: 1px solid #efefef; border-bottom: 1px solid #999; }
.box { width: 81px; height: 15px; margin-left: 3px; background: #fff; display: flex; align-items: center; justify-content: flex-end; padding-right: 1px; }
.area { width: 75px; padding-left: 3px; justify-content: space-between; margin-left: 3px; }
.funnel { margin-left: 5px; margin-right: 1px; }
.dim { color: #888; }
.dimdrop { background: #777; margin: 0 4px 0 6px; }
.all { margin-right: 1px; }
.vline.dark { background: #888; margin: 0 3px 0 6px; }
.gridico { margin: 0 2px 0 4px; }
.list { height: 246px; width: 350px; display: flex; border-bottom: 1px solid #e5e5e5; }
.features { width: 338px; overflow: hidden; }
.group { height: 12px; display: flex; align-items: center; gap: 4px; padding: 0 3px 0 9px; color: #2f4ea5; }
.group svg { width: 10px; height: 10px; }
.rule { flex: 1; height: 1px; background: #dbe9f5; }
.second.group { margin-top: 2px; }
.cells { display: grid; grid-template-columns: repeat(6, 50.800px); grid-auto-rows: 51px; }
.group + .cells { padding: 2px 0 0 .7px; }
.cell { display: flex; flex-direction: column; align-items: center; line-height: 10.200px; padding-top: 1px; }
.big { width: 22px; height: 22px; margin-bottom: 2px; flex: none; }
.hot { height: 37px; background: #f1f7fd; outline: 1px solid #c6def4; outline-offset: -1px; }
.tabs { height: 17px; display: flex; align-items: center; gap: 2px; padding-left: 4px; }
.tab { height: 13px; display: flex; align-items: center; gap: 1px; line-height: 11px; }
.on { border: 1px solid #66a7e8; background: #f4f9ff; padding: 0 3px 0 1px; gap: 2px; }

.actions { width: 135px; margin-left: 5px; border-left: 1px solid #a5a5a5; border-bottom: 1px solid #aaa; background: linear-gradient(90deg, #fff 25%, #dcdcdc); }
.sep { display: flex; align-items: center; padding: 0 2px 0 3px; }
.sep::before { content: ""; height: 1px; flex: 1; background: #b5b5b5; }
.action { height: 13.500px; display: flex; align-items: center; gap: 5px; padding-left: 3px; color: #2470d0; }
.action.title { color: #111; font-weight: 700; -webkit-text-stroke: 0; }
.action.off { color: #999; }
.two { height: 20.450px; line-height: 10.200px; }
.section { height: 18px; display: flex; align-items: center; justify-content: space-between; padding: 1px 8px 0 4px; background: linear-gradient(90deg, #fff, #f3f3f3); }
.section svg { width: 11px; height: 11px; margin-top: -1px; }
footer { height: 16px; display: flex; align-items: center; justify-content: space-between; padding: 3px 6px 0 3px; background: #f3f3f3; line-height: 13px; color: #1c1c1c; }
.tooltip { position: absolute; left: 329px; top: 191px; width: 258px; height: 14px; border: 1px solid #888; background: #f4f5f9; padding-left: 3px; line-height: 12px; color: #555; }
.mark { position: absolute; border: 2px solid #f50f17; }
.m1 { left: 29px; top: 116px; width: 105px; height: 24px; }
.m2 { left: 617px; top: 96px; width: 63px; height: 25px; }
.num { position: absolute; color: #f02020; font-size: 9px; }
.n1 { left: 10px; top: 121px; }
.n2 { left: 604px; top: 99px; }
</style>
